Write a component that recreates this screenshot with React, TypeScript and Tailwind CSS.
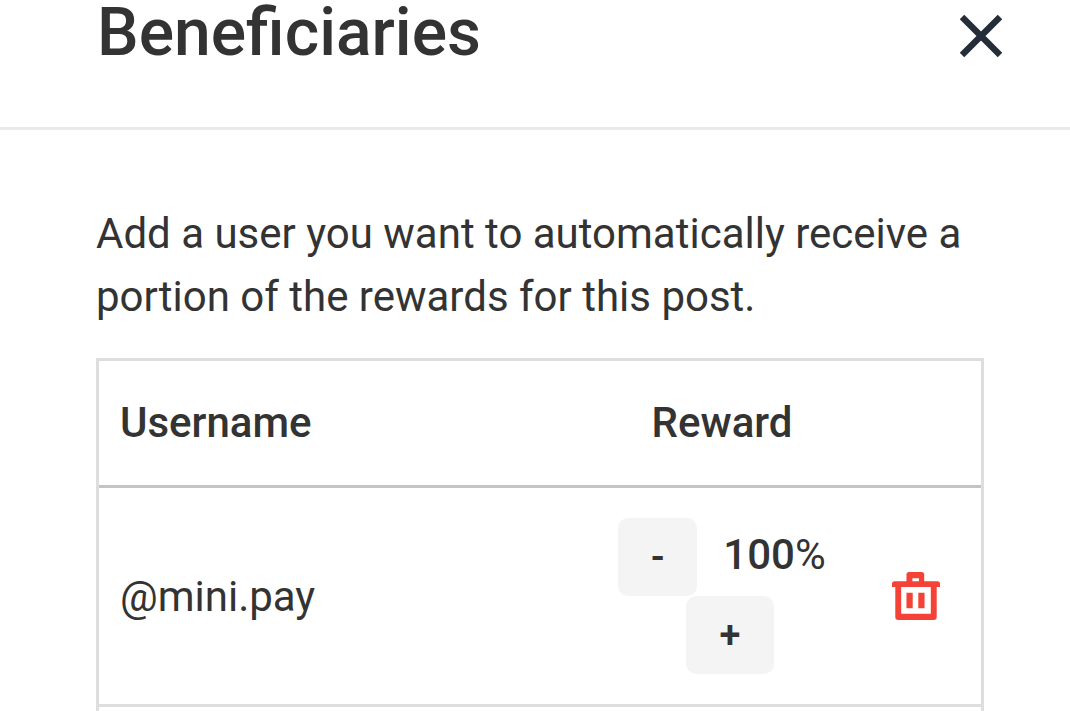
import { useState } from "react";

const CloseIcon = () => (
  <svg viewBox="0 0 42 42" className="h-[42px] w-[42px]" aria-hidden="true">
    <path
      d="M2 2 40 40M40 2 2 40"
      fill="none"
      stroke="#242d38"
      strokeWidth="6.4"
    />
  </svg>
);

const TrashIcon = () => (
  <svg viewBox="0 0 146 146" className="h-12 w-12" aria-hidden="true">
    <path
      fill="#f44336"
      fillRule="evenodd"
      d="M44 28V8Q44 0 52 0H90Q98 0 98 8V28H138Q146 28 146 36V46H136V137Q136 146 127 146H19Q10 146 10 137V46H0V36Q0 28 8 28ZM62 19V28H82V19ZM28 46V127H118V46ZM44 63H63V110H44ZM80 63H99V110H80Z"
    />
  </svg>
);

export default function App() {
  const [reward, setReward] = useState(100);

  const changeReward = (step: number) =>
    setReward((value) => Math.min(100, Math.max(0, value + step)));

  return (
    <div className="bg-white font-['Roboto',sans-serif] text-[42px] leading-[63px] text-[#333333]">
      <header className="flex items-end justify-between border-b-[3px] border-[#e9e9e9] pr-[59px] pb-[61px] pl-[97px]">
        <h1 className="text-[66px] leading-[66px] font-medium">
          Beneficiaries
        </h1>
        <button
          type="button"
          aria-label="Close"
          className="flex h-[60px] w-[60px] items-center justify-center"
        >
          <CloseIcon />
        </button>
      </header>
      <main className="pt-[72px] pr-[86px] pl-24">
        <p>
          Add a user you want to automatically receive a portion of the rewards
          for this post.
        </p>
        <table className="mt-[30px] w-full table-fixed border-separate border-spacing-0 border-x-[3px] border-t-[3px] border-[#dedede]">
          <thead>
            <tr>
              <th
                scope="col"
                className="border-b-[3px] border-[#c4c4c4] pt-[30px] pb-[31px] pl-[21px] text-left font-medium"
              >
                Username
              </th>
              <th
                scope="col"
                className="w-[258px] border-b-[3px] border-[#c4c4c4] pt-[30px] pb-[31px] text-center font-medium"
              >
                Reward
              </th>
              <td className="w-[130px] border-b-[3px] border-[#c4c4c4]"></td>
            </tr>
          </thead>
          <tbody>
            <tr>
              <td className="border-b-[3px] border-[#dedede] pl-[21px]">
                @mini.pay
              </td>
              <td className="border-b-[3px] border-[#dedede] py-[30px]">
                <div className="flex justify-center gap-[26px]">
                  <button
                    type="button"
                    aria-label="Decrease reward"
                    onClick={() => changeReward(-1)}
                    className="h-[78px] w-[79px] rounded-[10px] bg-[#f4f4f4] text-[38px] font-semibold"
                  >
                    -
                  </button>
                  <span className="pt-[5px]">
                    <span className="font-medium">{reward}</span>%
                  </span>
                </div>
                <div className="flex justify-center pl-4">
                  <button
                    type="button"
                    aria-label="Increase reward"
                    onClick={() => changeReward(1)}
                    className="h-[78px] w-[88px] rounded-[10px] bg-[#f4f4f4] text-[38px] font-semibold"
                  >
                    +
                  </button>
                </div>
              </td>
              <td className="border-b-[3px] border-[#dedede]">
                <button
                  type="button"
                  aria-label="Remove beneficiary"
                  className="mx-auto flex"
                >
                  <TrashIcon />
                </button>
              </td>
            </tr>
            <tr>
              <td colSpan={3} className="h-1 p-0"></td>
            </tr>
          </tbody>
        </table>
      </main>
    </div>
  );
}
